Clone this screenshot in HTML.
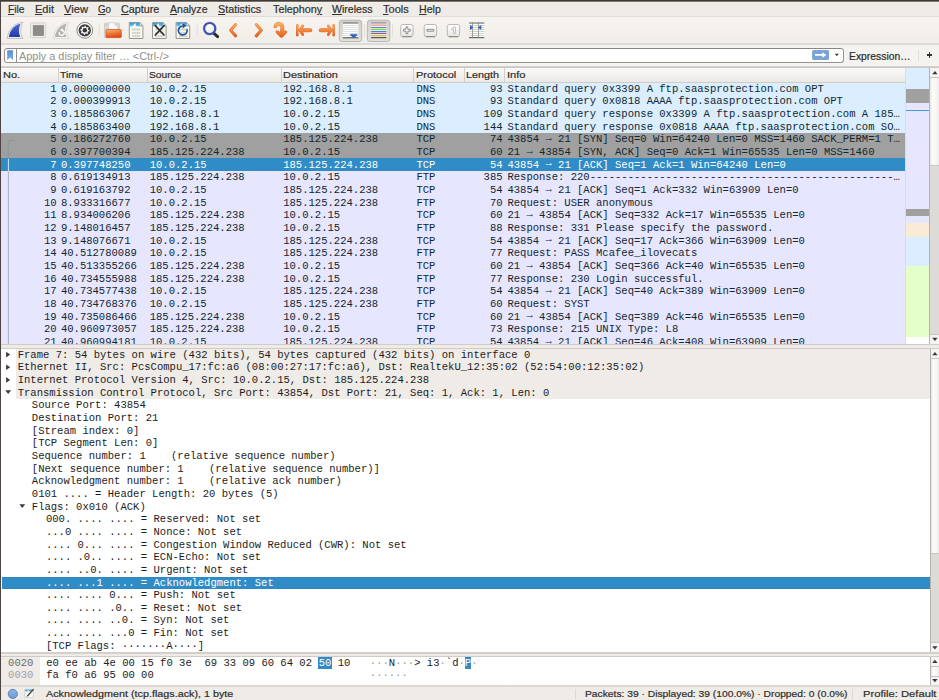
<!DOCTYPE html>
<html><head><meta charset="utf-8"><title>Wireshark</title>
<style>
html,body{margin:0;padding:0;}
body{width:939px;height:700px;overflow:hidden;position:relative;background:#efece8;font-family:"Liberation Sans",sans-serif;}
body div,body svg,body span.t{position:absolute;}
span.t{white-space:pre;display:block;}
span.s{-webkit-text-stroke:0.2px currentColor;}
.clip{overflow:hidden;}
i{font-style:normal;position:relative;top:-1.3px;}
u{text-decoration:underline;text-underline-offset:1.2px;text-decoration-thickness:1.15px;}
</style></head><body>
<div style="left:0.00px;top:0.00px;width:939.00px;height:700.00px;background:#efece8;"></div>
<div style="left:0.00px;top:0.00px;width:939.00px;height:16.30px;background:#efece8;"></div>
<div style="left:0.00px;top:1.60px;width:939.00px;height:1.20px;background:linear-gradient(#f9f7f4,#efece8);"></div>
<div style="left:0.00px;top:15.90px;width:939.00px;height:1.00px;background:#e0ddd8;"></div>
<div style="left:0.00px;top:16.90px;width:939.00px;height:25.80px;background:linear-gradient(#f7f4f0,#f1eeea);"></div>
<div style="left:0.00px;top:42.70px;width:939.00px;height:2.00px;background:linear-gradient(#e6e3df,#d9d6d1 50%,#e3e0dc);"></div>
<div style="left:0.00px;top:44.70px;width:939.00px;height:22.00px;background:#f5f3ef;"></div>
<span class="t s" style="top:2.26px;font-family:'Liberation Sans',sans-serif;font-size:10.5px;color:#302f2c;line-height:14.0px;left:8.40px;transform:scaleX(0.9801);transform-origin:0 0;"><u>F</u>ile</span>
<span class="t s" style="top:2.26px;font-family:'Liberation Sans',sans-serif;font-size:10.5px;color:#302f2c;line-height:14.0px;left:35.00px;transform:scaleX(1.0492);transform-origin:0 0;"><u>E</u>dit</span>
<span class="t s" style="top:2.26px;font-family:'Liberation Sans',sans-serif;font-size:10.5px;color:#302f2c;line-height:14.0px;left:64.00px;transform:scaleX(1.0622);transform-origin:0 0;"><u>V</u>iew</span>
<span class="t s" style="top:2.26px;font-family:'Liberation Sans',sans-serif;font-size:10.5px;color:#302f2c;line-height:14.0px;left:98.00px;transform:scaleX(0.9275);transform-origin:0 0;"><u>G</u>o</span>
<span class="t s" style="top:2.26px;font-family:'Liberation Sans',sans-serif;font-size:10.5px;color:#302f2c;line-height:14.0px;left:121.20px;transform:scaleX(1.0247);transform-origin:0 0;"><u>C</u>apture</span>
<span class="t s" style="top:2.26px;font-family:'Liberation Sans',sans-serif;font-size:10.5px;color:#302f2c;line-height:14.0px;left:169.50px;transform:scaleX(1.0033);transform-origin:0 0;"><u>A</u>nalyze</span>
<span class="t s" style="top:2.26px;font-family:'Liberation Sans',sans-serif;font-size:10.5px;color:#302f2c;line-height:14.0px;left:218.00px;transform:scaleX(1.0278);transform-origin:0 0;"><u>S</u>tatistics</span>
<span class="t s" style="top:2.26px;font-family:'Liberation Sans',sans-serif;font-size:10.5px;color:#302f2c;line-height:14.0px;left:272.50px;transform:scaleX(1.0277);transform-origin:0 0;">Telephon<u>y</u></span>
<span class="t s" style="top:2.26px;font-family:'Liberation Sans',sans-serif;font-size:10.5px;color:#302f2c;line-height:14.0px;left:332.00px;transform:scaleX(1.0058);transform-origin:0 0;"><u>W</u>ireless</span>
<span class="t s" style="top:2.26px;font-family:'Liberation Sans',sans-serif;font-size:10.5px;color:#302f2c;line-height:14.0px;left:383.00px;transform:scaleX(1.0483);transform-origin:0 0;"><u>T</u>ools</span>
<span class="t s" style="top:2.26px;font-family:'Liberation Sans',sans-serif;font-size:10.5px;color:#302f2c;line-height:14.0px;left:418.70px;transform:scaleX(1.0088);transform-origin:0 0;"><u>H</u>elp</span>
<div style="left:4.00px;top:47.80px;width:839.50px;height:15.00px;background:#fff;border:1px solid #96938f;border-top-color:#8a8783;border-radius:3.5px;box-sizing:border-box;"></div>
<div style="left:16.10px;top:48.80px;width:0.90px;height:13.20px;background:#96938f;"></div>
<span class="t" style="top:48.66px;font-family:'Liberation Sans',sans-serif;font-size:10.5px;color:#918f8c;line-height:14.0px;left:19.40px;transform:scaleX(1.0372);transform-origin:0 0;">Apply a display filter … &lt;Ctrl-/&gt;</span>
<span class="t s" style="top:48.66px;font-family:'Liberation Sans',sans-serif;font-size:10.5px;color:#2c2b28;line-height:14.0px;left:848.70px;transform:scaleX(0.9863);transform-origin:0 0;">Expression…</span>
<div style="left:917.90px;top:49.50px;width:0.90px;height:11.50px;background:#e1deda;"></div>
<div style="left:926.50px;top:54.45px;width:5.60px;height:1.15px;background:#33322f;"></div>
<div style="left:928.75px;top:52.20px;width:1.15px;height:5.60px;background:#33322f;"></div>
<div style="left:1.00px;top:67.60px;width:903.60px;height:14.90px;background:linear-gradient(#fbfaf9,#ebe8e4);"></div>
<div style="left:1.00px;top:81.80px;width:903.60px;height:0.80px;background:#d0cdc8;"></div>
<div style="left:0.00px;top:66.00px;width:939.00px;height:1.70px;background:linear-gradient(#d9d6d1,#c6c3be);"></div>
<div style="left:57.70px;top:68.10px;width:0.80px;height:13.90px;background:#d3d0cb;"></div>
<div style="left:146.70px;top:68.10px;width:0.80px;height:13.90px;background:#d3d0cb;"></div>
<div style="left:280.70px;top:68.10px;width:0.80px;height:13.90px;background:#d3d0cb;"></div>
<div style="left:413.30px;top:68.10px;width:0.80px;height:13.90px;background:#d3d0cb;"></div>
<div style="left:463.50px;top:68.10px;width:0.80px;height:13.90px;background:#d3d0cb;"></div>
<div style="left:503.60px;top:68.10px;width:0.80px;height:13.90px;background:#d3d0cb;"></div>
<span class="t s" style="top:68.32px;font-family:'Liberation Sans',sans-serif;font-size:9.9px;color:#2e2d2a;line-height:14.0px;left:3.20px;transform:scaleX(1.1122);transform-origin:0 0;">No.</span>
<span class="t s" style="top:68.32px;font-family:'Liberation Sans',sans-serif;font-size:9.9px;color:#2e2d2a;line-height:14.0px;left:60.40px;transform:scaleX(1.0566);transform-origin:0 0;">Time</span>
<span class="t s" style="top:68.32px;font-family:'Liberation Sans',sans-serif;font-size:9.9px;color:#2e2d2a;line-height:14.0px;left:149.40px;transform:scaleX(1.0321);transform-origin:0 0;">Source</span>
<span class="t s" style="top:68.32px;font-family:'Liberation Sans',sans-serif;font-size:9.9px;color:#2e2d2a;line-height:14.0px;left:283.40px;transform:scaleX(1.1112);transform-origin:0 0;">Destination</span>
<span class="t s" style="top:68.32px;font-family:'Liberation Sans',sans-serif;font-size:9.9px;color:#2e2d2a;line-height:14.0px;left:416.30px;transform:scaleX(1.1094);transform-origin:0 0;">Protocol</span>
<span class="t s" style="top:68.32px;font-family:'Liberation Sans',sans-serif;font-size:9.9px;color:#2e2d2a;line-height:14.0px;left:466.30px;transform:scaleX(1.092);transform-origin:0 0;">Length</span>
<span class="t s" style="top:68.32px;font-family:'Liberation Sans',sans-serif;font-size:9.9px;color:#2e2d2a;line-height:14.0px;left:506.70px;transform:scaleX(1.1223);transform-origin:0 0;">Info</span>
<div class="clip" style="left:1px;top:82.50px;width:903.60px;height:261.70px;">
<div style="left:0.00px;top:0.00px;width:903.60px;height:12.95px;background:#daeeff;"></div>
<span class="t" style="top:-0.66px;left:49.26px;font-family:'Liberation Mono',monospace;font-size:10.56px;color:#12272e;line-height:14.0px;">1</span>
<span class="t" style="top:-0.66px;font-family:'Liberation Mono',monospace;font-size:10.56px;color:#12272e;line-height:14.0px;left:59.90px;">0.000000000</span>
<span class="t" style="top:-0.66px;font-family:'Liberation Mono',monospace;font-size:10.56px;color:#12272e;line-height:14.0px;left:148.70px;">10.0.2.15</span>
<span class="t" style="top:-0.66px;font-family:'Liberation Mono',monospace;font-size:10.56px;color:#12272e;line-height:14.0px;left:282.20px;">192.168.8.1</span>
<span class="t" style="top:-0.66px;font-family:'Liberation Mono',monospace;font-size:10.56px;color:#12272e;line-height:14.0px;left:415.40px;">DNS</span>
<span class="t" style="top:-0.66px;left:488.93px;font-family:'Liberation Mono',monospace;font-size:10.56px;color:#12272e;line-height:14.0px;">93</span>
<span class="t" style="top:-0.66px;font-family:'Liberation Mono',monospace;font-size:10.56px;color:#12272e;line-height:14.0px;left:506.40px;">Standard query 0x3399 A ftp.saasprotection.com OPT</span>
<div style="left:0.00px;top:12.65px;width:903.60px;height:12.95px;background:#daeeff;"></div>
<span class="t" style="top:11.99px;left:49.26px;font-family:'Liberation Mono',monospace;font-size:10.56px;color:#12272e;line-height:14.0px;">2</span>
<span class="t" style="top:11.99px;font-family:'Liberation Mono',monospace;font-size:10.56px;color:#12272e;line-height:14.0px;left:59.90px;">0.000399913</span>
<span class="t" style="top:11.99px;font-family:'Liberation Mono',monospace;font-size:10.56px;color:#12272e;line-height:14.0px;left:148.70px;">10.0.2.15</span>
<span class="t" style="top:11.99px;font-family:'Liberation Mono',monospace;font-size:10.56px;color:#12272e;line-height:14.0px;left:282.20px;">192.168.8.1</span>
<span class="t" style="top:11.99px;font-family:'Liberation Mono',monospace;font-size:10.56px;color:#12272e;line-height:14.0px;left:415.40px;">DNS</span>
<span class="t" style="top:11.99px;left:488.93px;font-family:'Liberation Mono',monospace;font-size:10.56px;color:#12272e;line-height:14.0px;">93</span>
<span class="t" style="top:11.99px;font-family:'Liberation Mono',monospace;font-size:10.56px;color:#12272e;line-height:14.0px;left:506.40px;">Standard query 0x0818 AAAA ftp.saasprotection.com OPT</span>
<div style="left:0.00px;top:25.30px;width:903.60px;height:12.95px;background:#daeeff;"></div>
<span class="t" style="top:24.64px;left:49.26px;font-family:'Liberation Mono',monospace;font-size:10.56px;color:#12272e;line-height:14.0px;">3</span>
<span class="t" style="top:24.64px;font-family:'Liberation Mono',monospace;font-size:10.56px;color:#12272e;line-height:14.0px;left:59.90px;">0.185863067</span>
<span class="t" style="top:24.64px;font-family:'Liberation Mono',monospace;font-size:10.56px;color:#12272e;line-height:14.0px;left:148.70px;">192.168.8.1</span>
<span class="t" style="top:24.64px;font-family:'Liberation Mono',monospace;font-size:10.56px;color:#12272e;line-height:14.0px;left:282.20px;">10.0.2.15</span>
<span class="t" style="top:24.64px;font-family:'Liberation Mono',monospace;font-size:10.56px;color:#12272e;line-height:14.0px;left:415.40px;">DNS</span>
<span class="t" style="top:24.64px;left:482.59px;font-family:'Liberation Mono',monospace;font-size:10.56px;color:#12272e;line-height:14.0px;">109</span>
<span class="t" style="top:24.64px;font-family:'Liberation Mono',monospace;font-size:10.56px;color:#12272e;line-height:14.0px;left:506.40px;">Standard query response 0x3399 A ftp.saasprotection.com A 185…</span>
<div style="left:0.00px;top:37.95px;width:903.60px;height:12.95px;background:#daeeff;"></div>
<span class="t" style="top:37.29px;left:49.26px;font-family:'Liberation Mono',monospace;font-size:10.56px;color:#12272e;line-height:14.0px;">4</span>
<span class="t" style="top:37.29px;font-family:'Liberation Mono',monospace;font-size:10.56px;color:#12272e;line-height:14.0px;left:59.90px;">0.185863400</span>
<span class="t" style="top:37.29px;font-family:'Liberation Mono',monospace;font-size:10.56px;color:#12272e;line-height:14.0px;left:148.70px;">192.168.8.1</span>
<span class="t" style="top:37.29px;font-family:'Liberation Mono',monospace;font-size:10.56px;color:#12272e;line-height:14.0px;left:282.20px;">10.0.2.15</span>
<span class="t" style="top:37.29px;font-family:'Liberation Mono',monospace;font-size:10.56px;color:#12272e;line-height:14.0px;left:415.40px;">DNS</span>
<span class="t" style="top:37.29px;left:482.59px;font-family:'Liberation Mono',monospace;font-size:10.56px;color:#12272e;line-height:14.0px;">144</span>
<span class="t" style="top:37.29px;font-family:'Liberation Mono',monospace;font-size:10.56px;color:#12272e;line-height:14.0px;left:506.40px;">Standard query response 0x0818 AAAA ftp.saasprotection.com SO…</span>
<div style="left:0.00px;top:50.60px;width:903.60px;height:12.95px;background:#a0a0a0;"></div>
<span class="t" style="top:49.94px;left:49.26px;font-family:'Liberation Mono',monospace;font-size:10.56px;color:#12272e;line-height:14.0px;">5</span>
<span class="t" style="top:49.94px;font-family:'Liberation Mono',monospace;font-size:10.56px;color:#12272e;line-height:14.0px;left:59.90px;">0.186272760</span>
<span class="t" style="top:49.94px;font-family:'Liberation Mono',monospace;font-size:10.56px;color:#12272e;line-height:14.0px;left:148.70px;">10.0.2.15</span>
<span class="t" style="top:49.94px;font-family:'Liberation Mono',monospace;font-size:10.56px;color:#12272e;line-height:14.0px;left:282.20px;">185.125.224.238</span>
<span class="t" style="top:49.94px;font-family:'Liberation Mono',monospace;font-size:10.56px;color:#12272e;line-height:14.0px;left:415.40px;">TCP</span>
<span class="t" style="top:49.94px;left:488.93px;font-family:'Liberation Mono',monospace;font-size:10.56px;color:#12272e;line-height:14.0px;">74</span>
<span class="t" style="top:49.94px;font-family:'Liberation Mono',monospace;font-size:10.56px;color:#12272e;line-height:14.0px;left:506.40px;">43854 <i>→</i> 21 [SYN] Seq=0 Win=64240 Len=0 MSS=1460 SACK_PERM=1 T…</span>
<div style="left:0.00px;top:63.25px;width:903.60px;height:12.95px;background:#a0a0a0;"></div>
<span class="t" style="top:62.59px;left:49.26px;font-family:'Liberation Mono',monospace;font-size:10.56px;color:#12272e;line-height:14.0px;">6</span>
<span class="t" style="top:62.59px;font-family:'Liberation Mono',monospace;font-size:10.56px;color:#12272e;line-height:14.0px;left:59.90px;">0.397700394</span>
<span class="t" style="top:62.59px;font-family:'Liberation Mono',monospace;font-size:10.56px;color:#12272e;line-height:14.0px;left:148.70px;">185.125.224.238</span>
<span class="t" style="top:62.59px;font-family:'Liberation Mono',monospace;font-size:10.56px;color:#12272e;line-height:14.0px;left:282.20px;">10.0.2.15</span>
<span class="t" style="top:62.59px;font-family:'Liberation Mono',monospace;font-size:10.56px;color:#12272e;line-height:14.0px;left:415.40px;">TCP</span>
<span class="t" style="top:62.59px;left:488.93px;font-family:'Liberation Mono',monospace;font-size:10.56px;color:#12272e;line-height:14.0px;">60</span>
<span class="t" style="top:62.59px;font-family:'Liberation Mono',monospace;font-size:10.56px;color:#12272e;line-height:14.0px;left:506.40px;">21 <i>→</i> 43854 [SYN, ACK] Seq=0 Ack=1 Win=65535 Len=0 MSS=1460</span>
<div style="left:0.00px;top:75.90px;width:903.60px;height:12.95px;background:#308cc6;"></div>
<span class="t" style="top:75.24px;left:49.26px;font-family:'Liberation Mono',monospace;font-size:10.56px;color:#fff;line-height:14.0px;">7</span>
<span class="t" style="top:75.24px;font-family:'Liberation Mono',monospace;font-size:10.56px;color:#fff;line-height:14.0px;left:59.90px;">0.397748250</span>
<span class="t" style="top:75.24px;font-family:'Liberation Mono',monospace;font-size:10.56px;color:#fff;line-height:14.0px;left:148.70px;">10.0.2.15</span>
<span class="t" style="top:75.24px;font-family:'Liberation Mono',monospace;font-size:10.56px;color:#fff;line-height:14.0px;left:282.20px;">185.125.224.238</span>
<span class="t" style="top:75.24px;font-family:'Liberation Mono',monospace;font-size:10.56px;color:#fff;line-height:14.0px;left:415.40px;">TCP</span>
<span class="t" style="top:75.24px;left:488.93px;font-family:'Liberation Mono',monospace;font-size:10.56px;color:#fff;line-height:14.0px;">54</span>
<span class="t" style="top:75.24px;font-family:'Liberation Mono',monospace;font-size:10.56px;color:#fff;line-height:14.0px;left:506.40px;">43854 <i>→</i> 21 [ACK] Seq=1 Ack=1 Win=64240 Len=0</span>
<div style="left:0.00px;top:88.55px;width:903.60px;height:12.95px;background:#e7e6ff;"></div>
<span class="t" style="top:87.89px;left:49.26px;font-family:'Liberation Mono',monospace;font-size:10.56px;color:#12272e;line-height:14.0px;">8</span>
<span class="t" style="top:87.89px;font-family:'Liberation Mono',monospace;font-size:10.56px;color:#12272e;line-height:14.0px;left:59.90px;">0.619134913</span>
<span class="t" style="top:87.89px;font-family:'Liberation Mono',monospace;font-size:10.56px;color:#12272e;line-height:14.0px;left:148.70px;">185.125.224.238</span>
<span class="t" style="top:87.89px;font-family:'Liberation Mono',monospace;font-size:10.56px;color:#12272e;line-height:14.0px;left:282.20px;">10.0.2.15</span>
<span class="t" style="top:87.89px;font-family:'Liberation Mono',monospace;font-size:10.56px;color:#12272e;line-height:14.0px;left:415.40px;">FTP</span>
<span class="t" style="top:87.89px;left:482.59px;font-family:'Liberation Mono',monospace;font-size:10.56px;color:#12272e;line-height:14.0px;">385</span>
<span class="t" style="top:87.89px;font-family:'Liberation Mono',monospace;font-size:10.56px;color:#12272e;line-height:14.0px;left:506.40px;">Response: 220------------------------------------------------…</span>
<div style="left:0.00px;top:101.20px;width:903.60px;height:12.95px;background:#e7e6ff;"></div>
<span class="t" style="top:100.54px;left:49.26px;font-family:'Liberation Mono',monospace;font-size:10.56px;color:#12272e;line-height:14.0px;">9</span>
<span class="t" style="top:100.54px;font-family:'Liberation Mono',monospace;font-size:10.56px;color:#12272e;line-height:14.0px;left:59.90px;">0.619163792</span>
<span class="t" style="top:100.54px;font-family:'Liberation Mono',monospace;font-size:10.56px;color:#12272e;line-height:14.0px;left:148.70px;">10.0.2.15</span>
<span class="t" style="top:100.54px;font-family:'Liberation Mono',monospace;font-size:10.56px;color:#12272e;line-height:14.0px;left:282.20px;">185.125.224.238</span>
<span class="t" style="top:100.54px;font-family:'Liberation Mono',monospace;font-size:10.56px;color:#12272e;line-height:14.0px;left:415.40px;">TCP</span>
<span class="t" style="top:100.54px;left:488.93px;font-family:'Liberation Mono',monospace;font-size:10.56px;color:#12272e;line-height:14.0px;">54</span>
<span class="t" style="top:100.54px;font-family:'Liberation Mono',monospace;font-size:10.56px;color:#12272e;line-height:14.0px;left:506.40px;">43854 <i>→</i> 21 [ACK] Seq=1 Ack=332 Win=63909 Len=0</span>
<div style="left:0.00px;top:113.85px;width:903.60px;height:12.95px;background:#e7e6ff;"></div>
<span class="t" style="top:113.19px;left:42.93px;font-family:'Liberation Mono',monospace;font-size:10.56px;color:#12272e;line-height:14.0px;">10</span>
<span class="t" style="top:113.19px;font-family:'Liberation Mono',monospace;font-size:10.56px;color:#12272e;line-height:14.0px;left:59.90px;">8.933316677</span>
<span class="t" style="top:113.19px;font-family:'Liberation Mono',monospace;font-size:10.56px;color:#12272e;line-height:14.0px;left:148.70px;">10.0.2.15</span>
<span class="t" style="top:113.19px;font-family:'Liberation Mono',monospace;font-size:10.56px;color:#12272e;line-height:14.0px;left:282.20px;">185.125.224.238</span>
<span class="t" style="top:113.19px;font-family:'Liberation Mono',monospace;font-size:10.56px;color:#12272e;line-height:14.0px;left:415.40px;">FTP</span>
<span class="t" style="top:113.19px;left:488.93px;font-family:'Liberation Mono',monospace;font-size:10.56px;color:#12272e;line-height:14.0px;">70</span>
<span class="t" style="top:113.19px;font-family:'Liberation Mono',monospace;font-size:10.56px;color:#12272e;line-height:14.0px;left:506.40px;">Request: USER anonymous</span>
<div style="left:0.00px;top:126.50px;width:903.60px;height:12.95px;background:#e7e6ff;"></div>
<span class="t" style="top:125.84px;left:42.93px;font-family:'Liberation Mono',monospace;font-size:10.56px;color:#12272e;line-height:14.0px;">11</span>
<span class="t" style="top:125.84px;font-family:'Liberation Mono',monospace;font-size:10.56px;color:#12272e;line-height:14.0px;left:59.90px;">8.934006206</span>
<span class="t" style="top:125.84px;font-family:'Liberation Mono',monospace;font-size:10.56px;color:#12272e;line-height:14.0px;left:148.70px;">185.125.224.238</span>
<span class="t" style="top:125.84px;font-family:'Liberation Mono',monospace;font-size:10.56px;color:#12272e;line-height:14.0px;left:282.20px;">10.0.2.15</span>
<span class="t" style="top:125.84px;font-family:'Liberation Mono',monospace;font-size:10.56px;color:#12272e;line-height:14.0px;left:415.40px;">TCP</span>
<span class="t" style="top:125.84px;left:488.93px;font-family:'Liberation Mono',monospace;font-size:10.56px;color:#12272e;line-height:14.0px;">60</span>
<span class="t" style="top:125.84px;font-family:'Liberation Mono',monospace;font-size:10.56px;color:#12272e;line-height:14.0px;left:506.40px;">21 <i>→</i> 43854 [ACK] Seq=332 Ack=17 Win=65535 Len=0</span>
<div style="left:0.00px;top:139.15px;width:903.60px;height:12.95px;background:#e7e6ff;"></div>
<span class="t" style="top:138.49px;left:42.93px;font-family:'Liberation Mono',monospace;font-size:10.56px;color:#12272e;line-height:14.0px;">12</span>
<span class="t" style="top:138.49px;font-family:'Liberation Mono',monospace;font-size:10.56px;color:#12272e;line-height:14.0px;left:59.90px;">9.148016457</span>
<span class="t" style="top:138.49px;font-family:'Liberation Mono',monospace;font-size:10.56px;color:#12272e;line-height:14.0px;left:148.70px;">185.125.224.238</span>
<span class="t" style="top:138.49px;font-family:'Liberation Mono',monospace;font-size:10.56px;color:#12272e;line-height:14.0px;left:282.20px;">10.0.2.15</span>
<span class="t" style="top:138.49px;font-family:'Liberation Mono',monospace;font-size:10.56px;color:#12272e;line-height:14.0px;left:415.40px;">FTP</span>
<span class="t" style="top:138.49px;left:488.93px;font-family:'Liberation Mono',monospace;font-size:10.56px;color:#12272e;line-height:14.0px;">88</span>
<span class="t" style="top:138.49px;font-family:'Liberation Mono',monospace;font-size:10.56px;color:#12272e;line-height:14.0px;left:506.40px;">Response: 331 Please specify the password.</span>
<div style="left:0.00px;top:151.80px;width:903.60px;height:12.95px;background:#e7e6ff;"></div>
<span class="t" style="top:151.14px;left:42.93px;font-family:'Liberation Mono',monospace;font-size:10.56px;color:#12272e;line-height:14.0px;">13</span>
<span class="t" style="top:151.14px;font-family:'Liberation Mono',monospace;font-size:10.56px;color:#12272e;line-height:14.0px;left:59.90px;">9.148076671</span>
<span class="t" style="top:151.14px;font-family:'Liberation Mono',monospace;font-size:10.56px;color:#12272e;line-height:14.0px;left:148.70px;">10.0.2.15</span>
<span class="t" style="top:151.14px;font-family:'Liberation Mono',monospace;font-size:10.56px;color:#12272e;line-height:14.0px;left:282.20px;">185.125.224.238</span>
<span class="t" style="top:151.14px;font-family:'Liberation Mono',monospace;font-size:10.56px;color:#12272e;line-height:14.0px;left:415.40px;">TCP</span>
<span class="t" style="top:151.14px;left:488.93px;font-family:'Liberation Mono',monospace;font-size:10.56px;color:#12272e;line-height:14.0px;">54</span>
<span class="t" style="top:151.14px;font-family:'Liberation Mono',monospace;font-size:10.56px;color:#12272e;line-height:14.0px;left:506.40px;">43854 <i>→</i> 21 [ACK] Seq=17 Ack=366 Win=63909 Len=0</span>
<div style="left:0.00px;top:164.45px;width:903.60px;height:12.95px;background:#e7e6ff;"></div>
<span class="t" style="top:163.79px;left:42.93px;font-family:'Liberation Mono',monospace;font-size:10.56px;color:#12272e;line-height:14.0px;">14</span>
<span class="t" style="top:163.79px;font-family:'Liberation Mono',monospace;font-size:10.56px;color:#12272e;line-height:14.0px;left:59.90px;">40.512780089</span>
<span class="t" style="top:163.79px;font-family:'Liberation Mono',monospace;font-size:10.56px;color:#12272e;line-height:14.0px;left:148.70px;">10.0.2.15</span>
<span class="t" style="top:163.79px;font-family:'Liberation Mono',monospace;font-size:10.56px;color:#12272e;line-height:14.0px;left:282.20px;">185.125.224.238</span>
<span class="t" style="top:163.79px;font-family:'Liberation Mono',monospace;font-size:10.56px;color:#12272e;line-height:14.0px;left:415.40px;">FTP</span>
<span class="t" style="top:163.79px;left:488.93px;font-family:'Liberation Mono',monospace;font-size:10.56px;color:#12272e;line-height:14.0px;">77</span>
<span class="t" style="top:163.79px;font-family:'Liberation Mono',monospace;font-size:10.56px;color:#12272e;line-height:14.0px;left:506.40px;">Request: PASS Mcafee_ilovecats</span>
<div style="left:0.00px;top:177.10px;width:903.60px;height:12.95px;background:#e7e6ff;"></div>
<span class="t" style="top:176.44px;left:42.93px;font-family:'Liberation Mono',monospace;font-size:10.56px;color:#12272e;line-height:14.0px;">15</span>
<span class="t" style="top:176.44px;font-family:'Liberation Mono',monospace;font-size:10.56px;color:#12272e;line-height:14.0px;left:59.90px;">40.513355266</span>
<span class="t" style="top:176.44px;font-family:'Liberation Mono',monospace;font-size:10.56px;color:#12272e;line-height:14.0px;left:148.70px;">185.125.224.238</span>
<span class="t" style="top:176.44px;font-family:'Liberation Mono',monospace;font-size:10.56px;color:#12272e;line-height:14.0px;left:282.20px;">10.0.2.15</span>
<span class="t" style="top:176.44px;font-family:'Liberation Mono',monospace;font-size:10.56px;color:#12272e;line-height:14.0px;left:415.40px;">TCP</span>
<span class="t" style="top:176.44px;left:488.93px;font-family:'Liberation Mono',monospace;font-size:10.56px;color:#12272e;line-height:14.0px;">60</span>
<span class="t" style="top:176.44px;font-family:'Liberation Mono',monospace;font-size:10.56px;color:#12272e;line-height:14.0px;left:506.40px;">21 <i>→</i> 43854 [ACK] Seq=366 Ack=40 Win=65535 Len=0</span>
<div style="left:0.00px;top:189.75px;width:903.60px;height:12.95px;background:#e7e6ff;"></div>
<span class="t" style="top:189.09px;left:42.93px;font-family:'Liberation Mono',monospace;font-size:10.56px;color:#12272e;line-height:14.0px;">16</span>
<span class="t" style="top:189.09px;font-family:'Liberation Mono',monospace;font-size:10.56px;color:#12272e;line-height:14.0px;left:59.90px;">40.734555988</span>
<span class="t" style="top:189.09px;font-family:'Liberation Mono',monospace;font-size:10.56px;color:#12272e;line-height:14.0px;left:148.70px;">185.125.224.238</span>
<span class="t" style="top:189.09px;font-family:'Liberation Mono',monospace;font-size:10.56px;color:#12272e;line-height:14.0px;left:282.20px;">10.0.2.15</span>
<span class="t" style="top:189.09px;font-family:'Liberation Mono',monospace;font-size:10.56px;color:#12272e;line-height:14.0px;left:415.40px;">FTP</span>
<span class="t" style="top:189.09px;left:488.93px;font-family:'Liberation Mono',monospace;font-size:10.56px;color:#12272e;line-height:14.0px;">77</span>
<span class="t" style="top:189.09px;font-family:'Liberation Mono',monospace;font-size:10.56px;color:#12272e;line-height:14.0px;left:506.40px;">Response: 230 Login successful.</span>
<div style="left:0.00px;top:202.40px;width:903.60px;height:12.95px;background:#e7e6ff;"></div>
<span class="t" style="top:201.74px;left:42.93px;font-family:'Liberation Mono',monospace;font-size:10.56px;color:#12272e;line-height:14.0px;">17</span>
<span class="t" style="top:201.74px;font-family:'Liberation Mono',monospace;font-size:10.56px;color:#12272e;line-height:14.0px;left:59.90px;">40.734577438</span>
<span class="t" style="top:201.74px;font-family:'Liberation Mono',monospace;font-size:10.56px;color:#12272e;line-height:14.0px;left:148.70px;">10.0.2.15</span>
<span class="t" style="top:201.74px;font-family:'Liberation Mono',monospace;font-size:10.56px;color:#12272e;line-height:14.0px;left:282.20px;">185.125.224.238</span>
<span class="t" style="top:201.74px;font-family:'Liberation Mono',monospace;font-size:10.56px;color:#12272e;line-height:14.0px;left:415.40px;">TCP</span>
<span class="t" style="top:201.74px;left:488.93px;font-family:'Liberation Mono',monospace;font-size:10.56px;color:#12272e;line-height:14.0px;">54</span>
<span class="t" style="top:201.74px;font-family:'Liberation Mono',monospace;font-size:10.56px;color:#12272e;line-height:14.0px;left:506.40px;">43854 <i>→</i> 21 [ACK] Seq=40 Ack=389 Win=63909 Len=0</span>
<div style="left:0.00px;top:215.05px;width:903.60px;height:12.95px;background:#e7e6ff;"></div>
<span class="t" style="top:214.39px;left:42.93px;font-family:'Liberation Mono',monospace;font-size:10.56px;color:#12272e;line-height:14.0px;">18</span>
<span class="t" style="top:214.39px;font-family:'Liberation Mono',monospace;font-size:10.56px;color:#12272e;line-height:14.0px;left:59.90px;">40.734768376</span>
<span class="t" style="top:214.39px;font-family:'Liberation Mono',monospace;font-size:10.56px;color:#12272e;line-height:14.0px;left:148.70px;">10.0.2.15</span>
<span class="t" style="top:214.39px;font-family:'Liberation Mono',monospace;font-size:10.56px;color:#12272e;line-height:14.0px;left:282.20px;">185.125.224.238</span>
<span class="t" style="top:214.39px;font-family:'Liberation Mono',monospace;font-size:10.56px;color:#12272e;line-height:14.0px;left:415.40px;">FTP</span>
<span class="t" style="top:214.39px;left:488.93px;font-family:'Liberation Mono',monospace;font-size:10.56px;color:#12272e;line-height:14.0px;">60</span>
<span class="t" style="top:214.39px;font-family:'Liberation Mono',monospace;font-size:10.56px;color:#12272e;line-height:14.0px;left:506.40px;">Request: SYST</span>
<div style="left:0.00px;top:227.70px;width:903.60px;height:12.95px;background:#e7e6ff;"></div>
<span class="t" style="top:227.04px;left:42.93px;font-family:'Liberation Mono',monospace;font-size:10.56px;color:#12272e;line-height:14.0px;">19</span>
<span class="t" style="top:227.04px;font-family:'Liberation Mono',monospace;font-size:10.56px;color:#12272e;line-height:14.0px;left:59.90px;">40.735086466</span>
<span class="t" style="top:227.04px;font-family:'Liberation Mono',monospace;font-size:10.56px;color:#12272e;line-height:14.0px;left:148.70px;">185.125.224.238</span>
<span class="t" style="top:227.04px;font-family:'Liberation Mono',monospace;font-size:10.56px;color:#12272e;line-height:14.0px;left:282.20px;">10.0.2.15</span>
<span class="t" style="top:227.04px;font-family:'Liberation Mono',monospace;font-size:10.56px;color:#12272e;line-height:14.0px;left:415.40px;">TCP</span>
<span class="t" style="top:227.04px;left:488.93px;font-family:'Liberation Mono',monospace;font-size:10.56px;color:#12272e;line-height:14.0px;">60</span>
<span class="t" style="top:227.04px;font-family:'Liberation Mono',monospace;font-size:10.56px;color:#12272e;line-height:14.0px;left:506.40px;">21 <i>→</i> 43854 [ACK] Seq=389 Ack=46 Win=65535 Len=0</span>
<div style="left:0.00px;top:240.35px;width:903.60px;height:12.95px;background:#e7e6ff;"></div>
<span class="t" style="top:239.69px;left:42.93px;font-family:'Liberation Mono',monospace;font-size:10.56px;color:#12272e;line-height:14.0px;">20</span>
<span class="t" style="top:239.69px;font-family:'Liberation Mono',monospace;font-size:10.56px;color:#12272e;line-height:14.0px;left:59.90px;">40.960973057</span>
<span class="t" style="top:239.69px;font-family:'Liberation Mono',monospace;font-size:10.56px;color:#12272e;line-height:14.0px;left:148.70px;">185.125.224.238</span>
<span class="t" style="top:239.69px;font-family:'Liberation Mono',monospace;font-size:10.56px;color:#12272e;line-height:14.0px;left:282.20px;">10.0.2.15</span>
<span class="t" style="top:239.69px;font-family:'Liberation Mono',monospace;font-size:10.56px;color:#12272e;line-height:14.0px;left:415.40px;">FTP</span>
<span class="t" style="top:239.69px;left:488.93px;font-family:'Liberation Mono',monospace;font-size:10.56px;color:#12272e;line-height:14.0px;">73</span>
<span class="t" style="top:239.69px;font-family:'Liberation Mono',monospace;font-size:10.56px;color:#12272e;line-height:14.0px;left:506.40px;">Response: 215 UNIX Type: L8</span>
<div style="left:0.00px;top:253.00px;width:903.60px;height:12.95px;background:#e7e6ff;"></div>
<span class="t" style="top:252.34px;left:42.93px;font-family:'Liberation Mono',monospace;font-size:10.56px;color:#12272e;line-height:14.0px;">21</span>
<span class="t" style="top:252.34px;font-family:'Liberation Mono',monospace;font-size:10.56px;color:#12272e;line-height:14.0px;left:59.90px;">40.960994181</span>
<span class="t" style="top:252.34px;font-family:'Liberation Mono',monospace;font-size:10.56px;color:#12272e;line-height:14.0px;left:148.70px;">10.0.2.15</span>
<span class="t" style="top:252.34px;font-family:'Liberation Mono',monospace;font-size:10.56px;color:#12272e;line-height:14.0px;left:282.20px;">185.125.224.238</span>
<span class="t" style="top:252.34px;font-family:'Liberation Mono',monospace;font-size:10.56px;color:#12272e;line-height:14.0px;left:415.40px;">TCP</span>
<span class="t" style="top:252.34px;left:488.93px;font-family:'Liberation Mono',monospace;font-size:10.56px;color:#12272e;line-height:14.0px;">54</span>
<span class="t" style="top:252.34px;font-family:'Liberation Mono',monospace;font-size:10.56px;color:#12272e;line-height:14.0px;left:506.40px;">43854 <i>→</i> 21 [ACK] Seq=46 Ack=408 Win=63909 Len=0</span>
<svg style="left:0;top:0;width:60px;height:261.70px;" viewBox="0 0 60 261.70"><path d="M12.600000000000001,57.5 L7.4,57.5 L7.4,75.9" fill="none" stroke="#8c9498" stroke-width="0.8"/><path d="M2.0,70.95 L6.4,72.55 L13.0,68.25" fill="none" stroke="#949a9c" stroke-width="0.7"/><path d="M7.4,75.9 L7.4,88.55" stroke="#e8f2fa" stroke-width="0.9"/><path d="M7.4,88.55 L7.4,261.7" stroke="#a3a6bd" stroke-width="0.9"/></svg>
</div>
<div style="left:904.60px;top:67.60px;width:0.90px;height:276.60px;background:#dddbe0;"></div>
<div style="left:905.50px;top:67.90px;width:23.70px;height:21.30px;background:#daeeff;"></div>
<div style="left:905.50px;top:89.00px;width:23.70px;height:13.90px;background:#a0a0a0;"></div>
<div style="left:905.50px;top:102.70px;width:23.70px;height:106.50px;background:#e7e6ff;"></div>
<div style="left:905.50px;top:209.00px;width:23.70px;height:7.20px;background:#a0a0a0;"></div>
<div style="left:905.50px;top:216.00px;width:23.70px;height:7.50px;background:#e7e6ff;"></div>
<div style="left:905.50px;top:223.30px;width:23.70px;height:13.90px;background:#faebd7;"></div>
<div style="left:905.50px;top:237.00px;width:23.70px;height:29.20px;background:#daeeff;"></div>
<div style="left:905.50px;top:266.00px;width:23.70px;height:71.20px;background:#e4ffc7;"></div>
<div style="left:905.50px;top:337.00px;width:23.70px;height:7.00px;background:#ffffff;"></div>
<div style="left:905.50px;top:109.90px;width:23.70px;height:0.90px;background:#4a9bd1;"></div>
<div style="left:904.60px;top:343.70px;width:25.50px;height:0.80px;background:#b7b4b0;"></div>
<div style="left:929.20px;top:67.60px;width:1.00px;height:276.60px;background:#b7b4b0;"></div>
<div style="left:930.30px;top:67.60px;width:8.70px;height:276.60px;background:#dddbd8;"></div>
<div style="left:930.30px;top:67.60px;width:8.70px;height:9.60px;background:#f5f4f2;"></div>
<div style="left:930.30px;top:77.10px;width:8.70px;height:88.00px;background:linear-gradient(90deg,#e4e2df,#fbfbfa 25%,#f7f6f5 70%,#eceae8);"></div>
<div style="left:930.30px;top:77.00px;width:8.70px;height:0.70px;background:#c9c6c2;"></div>
<div style="left:930.30px;top:165.00px;width:8.70px;height:0.70px;background:#c9c6c2;"></div>
<div style="left:930.30px;top:334.30px;width:8.70px;height:9.90px;background:#f5f4f2;"></div>
<div style="left:930.30px;top:334.00px;width:8.70px;height:0.70px;background:#c9c6c2;"></div>
<svg style="left:0;top:0;width:939px;height:700px;" viewBox="0 0 939 700"><polygon points="932.1999999999999,74.3 937.6,74.3 934.9,71.10000000000001" fill="#3c3b37"/></svg>
<svg style="left:0;top:0;width:939px;height:700px;" viewBox="0 0 939 700"><polygon points="932.1999999999999,337.79999999999995 937.6,337.79999999999995 934.9,341.0" fill="#3c3b37"/></svg>
<div style="left:1.00px;top:348.90px;width:938.00px;height:303.60px;background:#fff;"></div>
<div style="left:0.00px;top:344.20px;width:939.00px;height:4.70px;background:#efece8;"></div>
<div style="left:0.00px;top:344.10px;width:939.00px;height:1.00px;background:#d0cdc8;"></div>
<div style="left:0.00px;top:347.90px;width:939.00px;height:1.00px;background:#d0cdc8;"></div>
<div style="left:16.00px;top:348.90px;width:914.20px;height:49.90px;background:#efebe7;"></div>
<span class="t" style="top:347.79px;font-family:'Liberation Mono',monospace;font-size:10.56px;color:#1c1c1c;line-height:14.0px;left:17.70px;">Frame 7: 54 bytes on wire (432 bits), 54 bytes captured (432 bits) on interface 0</span>
<svg style="left:0;top:0;width:939px;height:700px;" viewBox="0 0 939 700"><polygon points="6.1,351.8 6.1,357.40000000000003 10.2,354.6" fill="#3c3b37"/></svg>
<span class="t" style="top:360.44px;font-family:'Liberation Mono',monospace;font-size:10.56px;color:#1c1c1c;line-height:14.0px;left:17.70px;">Ethernet II, Src: PcsCompu_17:fc:a6 (08:00:27:17:fc:a6), Dst: RealtekU_12:35:02 (52:54:00:12:35:02)</span>
<svg style="left:0;top:0;width:939px;height:700px;" viewBox="0 0 939 700"><polygon points="6.1,364.452 6.1,370.052 10.2,367.252" fill="#3c3b37"/></svg>
<span class="t" style="top:373.09px;font-family:'Liberation Mono',monospace;font-size:10.56px;color:#1c1c1c;line-height:14.0px;left:17.70px;">Internet Protocol Version 4, Src: 10.0.2.15, Dst: 185.125.224.238</span>
<svg style="left:0;top:0;width:939px;height:700px;" viewBox="0 0 939 700"><polygon points="6.1,377.104 6.1,382.704 10.2,379.904" fill="#3c3b37"/></svg>
<span class="t" style="top:385.74px;font-family:'Liberation Mono',monospace;font-size:10.56px;color:#1c1c1c;line-height:14.0px;left:17.70px;">Transmission Control Protocol, Src Port: 43854, Dst Port: 21, Seq: 1, Ack: 1, Len: 0</span>
<svg style="left:0;top:0;width:939px;height:700px;" viewBox="0 0 939 700"><polygon points="5.299999999999999,390.35600000000005 11.1,390.35600000000005 8.2,394.05600000000004" fill="#3c3b37"/></svg>
<span class="t" style="top:398.39px;font-family:'Liberation Mono',monospace;font-size:10.56px;color:#1c1c1c;line-height:14.0px;left:31.80px;">Source Port: 43854</span>
<span class="t" style="top:411.05px;font-family:'Liberation Mono',monospace;font-size:10.56px;color:#1c1c1c;line-height:14.0px;left:31.80px;">Destination Port: 21</span>
<span class="t" style="top:423.70px;font-family:'Liberation Mono',monospace;font-size:10.56px;color:#1c1c1c;line-height:14.0px;left:31.80px;">[Stream index: 0]</span>
<span class="t" style="top:436.35px;font-family:'Liberation Mono',monospace;font-size:10.56px;color:#1c1c1c;line-height:14.0px;left:31.80px;">[TCP Segment Len: 0]</span>
<span class="t" style="top:449.00px;font-family:'Liberation Mono',monospace;font-size:10.56px;color:#1c1c1c;line-height:14.0px;left:31.80px;">Sequence number: 1    (relative sequence number)</span>
<span class="t" style="top:461.65px;font-family:'Liberation Mono',monospace;font-size:10.56px;color:#1c1c1c;line-height:14.0px;left:31.80px;">[Next sequence number: 1    (relative sequence number)]</span>
<span class="t" style="top:474.31px;font-family:'Liberation Mono',monospace;font-size:10.56px;color:#1c1c1c;line-height:14.0px;left:31.80px;">Acknowledgment number: 1    (relative ack number)</span>
<span class="t" style="top:486.96px;font-family:'Liberation Mono',monospace;font-size:10.56px;color:#1c1c1c;line-height:14.0px;left:31.80px;">0101 .... = Header Length: 20 bytes (5)</span>
<span class="t" style="top:499.61px;font-family:'Liberation Mono',monospace;font-size:10.56px;color:#1c1c1c;line-height:14.0px;left:31.80px;">Flags: 0x010 (ACK)</span>
<svg style="left:0;top:0;width:939px;height:700px;" viewBox="0 0 939 700"><polygon points="19.4,504.22400000000005 25.199999999999996,504.22400000000005 22.299999999999997,507.92400000000004" fill="#3c3b37"/></svg>
<span class="t" style="top:512.26px;font-family:'Liberation Mono',monospace;font-size:10.56px;color:#1c1c1c;line-height:14.0px;left:45.90px;">000. .... .... = Reserved: Not set</span>
<span class="t" style="top:524.91px;font-family:'Liberation Mono',monospace;font-size:10.56px;color:#1c1c1c;line-height:14.0px;left:45.90px;">...0 .... .... = Nonce: Not set</span>
<span class="t" style="top:537.57px;font-family:'Liberation Mono',monospace;font-size:10.56px;color:#1c1c1c;line-height:14.0px;left:45.90px;">.... 0... .... = Congestion Window Reduced (CWR): Not set</span>
<span class="t" style="top:550.22px;font-family:'Liberation Mono',monospace;font-size:10.56px;color:#1c1c1c;line-height:14.0px;left:45.90px;">.... .0.. .... = ECN-Echo: Not set</span>
<span class="t" style="top:562.87px;font-family:'Liberation Mono',monospace;font-size:10.56px;color:#1c1c1c;line-height:14.0px;left:45.90px;">.... ..0. .... = Urgent: Not set</span>
<div style="left:1.80px;top:576.89px;width:928.40px;height:12.30px;background:linear-gradient(#2c82bc,#308cc6 8%,#308cc6 92%,#2c82bc);"></div>
<span class="t" style="top:575.52px;font-family:'Liberation Mono',monospace;font-size:10.56px;color:#fff;line-height:14.0px;left:45.90px;">.... ...1 .... = Acknowledgment: Set</span>
<span class="t" style="top:588.17px;font-family:'Liberation Mono',monospace;font-size:10.56px;color:#1c1c1c;line-height:14.0px;left:45.90px;">.... .... 0... = Push: Not set</span>
<span class="t" style="top:600.83px;font-family:'Liberation Mono',monospace;font-size:10.56px;color:#1c1c1c;line-height:14.0px;left:45.90px;">.... .... .0.. = Reset: Not set</span>
<span class="t" style="top:613.48px;font-family:'Liberation Mono',monospace;font-size:10.56px;color:#1c1c1c;line-height:14.0px;left:45.90px;">.... .... ..0. = Syn: Not set</span>
<span class="t" style="top:626.13px;font-family:'Liberation Mono',monospace;font-size:10.56px;color:#1c1c1c;line-height:14.0px;left:45.90px;">.... .... ...0 = Fin: Not set</span>
<span class="t" style="top:638.78px;font-family:'Liberation Mono',monospace;font-size:10.56px;color:#1c1c1c;line-height:14.0px;left:45.90px;">[TCP Flags: ·······A····]</span>
<div style="left:930.20px;top:348.90px;width:0.90px;height:303.60px;background:#b7b4b0;"></div>
<div style="left:931.10px;top:348.90px;width:7.90px;height:303.60px;background:#dddbd8;"></div>
<div style="left:931.10px;top:348.90px;width:7.90px;height:9.40px;background:#f5f4f2;"></div>
<div style="left:931.10px;top:358.00px;width:7.90px;height:195.00px;background:linear-gradient(90deg,#e4e2df,#fbfbfa 25%,#f7f6f5 70%,#eceae8);"></div>
<div style="left:931.10px;top:357.80px;width:7.90px;height:0.70px;background:#c9c6c2;"></div>
<div style="left:931.10px;top:553.00px;width:7.90px;height:0.70px;background:#c9c6c2;"></div>
<div style="left:931.10px;top:642.60px;width:7.90px;height:9.90px;background:#f5f4f2;"></div>
<div style="left:931.10px;top:642.30px;width:7.90px;height:0.70px;background:#c9c6c2;"></div>
<svg style="left:0;top:0;width:939px;height:700px;" viewBox="0 0 939 700"><polygon points="932.1999999999999,355.20000000000005 937.6,355.20000000000005 934.9,352.0" fill="#3c3b37"/></svg>
<svg style="left:0;top:0;width:939px;height:700px;" viewBox="0 0 939 700"><polygon points="932.1999999999999,646.1999999999999 937.6,646.1999999999999 934.9,649.4" fill="#3c3b37"/></svg>
<div style="left:0.00px;top:652.50px;width:939.00px;height:4.00px;background:#efece8;"></div>
<div style="left:0.00px;top:652.40px;width:939.00px;height:1.20px;background:#d3d0cb;"></div>
<div style="left:1.00px;top:656.50px;width:938.00px;height:28.90px;background:#fff;"></div>
<div style="left:0.00px;top:655.50px;width:939.00px;height:1.10px;background:#cfccc7;"></div>
<div style="left:0.00px;top:685.40px;width:939.00px;height:1.70px;background:linear-gradient(#dedbd6,#d9d6d1 60%,#e6e3df);"></div>
<div style="left:1.00px;top:656.50px;width:38.50px;height:28.90px;background:#efebe7;"></div>
<span class="t" style="top:655.79px;font-family:'Liberation Mono',monospace;font-size:10.56px;color:#6e6e6e;line-height:14.0px;left:8.10px;">0020</span>
<span class="t" style="top:667.69px;font-family:'Liberation Mono',monospace;font-size:10.56px;color:#a2a2a2;line-height:14.0px;left:8.10px;">0030</span>
<div style="left:318.39px;top:657.30px;width:13.17px;height:12.20px;background:#308cc6;"></div>
<span class="t" style="top:655.79px;font-family:'Liberation Mono',monospace;font-size:10.56px;color:#1c1c1c;line-height:14.0px;left:46.20px;">e0 ee ab 4e 00 15 f0 3e  69 33 09 60 64 02 </span>
<span class="t" style="top:655.79px;font-family:'Liberation Mono',monospace;font-size:10.56px;color:#fff;line-height:14.0px;left:318.69px;">50</span>
<span class="t" style="top:655.79px;font-family:'Liberation Mono',monospace;font-size:10.56px;color:#1c1c1c;line-height:14.0px;left:337.70px;">10</span>
<span class="t" style="top:667.69px;font-family:'Liberation Mono',monospace;font-size:10.56px;color:#1c1c1c;line-height:14.0px;left:46.20px;">fa f0 a6 95 00 00</span>
<span class="t" style="top:655.79px;font-family:'Liberation Mono',monospace;font-size:10.56px;color:#9c9c9c;line-height:14.0px;left:369.80px;">···</span>
<span class="t" style="top:655.79px;font-family:'Liberation Mono',monospace;font-size:10.56px;color:#1c1c1c;line-height:14.0px;left:388.81px;">N</span>
<span class="t" style="top:655.79px;font-family:'Liberation Mono',monospace;font-size:10.56px;color:#9c9c9c;line-height:14.0px;left:395.15px;">···</span>
<span class="t" style="top:655.79px;font-family:'Liberation Mono',monospace;font-size:10.56px;color:#1c1c1c;line-height:14.0px;left:414.16px;">&gt;</span>
<span class="t" style="top:655.79px;font-family:'Liberation Mono',monospace;font-size:10.56px;color:#1c1c1c;line-height:14.0px;left:426.83px;">i3</span>
<span class="t" style="top:655.79px;font-family:'Liberation Mono',monospace;font-size:10.56px;color:#9c9c9c;line-height:14.0px;left:439.51px;">·</span>
<span class="t" style="top:655.79px;font-family:'Liberation Mono',monospace;font-size:10.56px;color:#1c1c1c;line-height:14.0px;left:445.84px;">`d</span>
<span class="t" style="top:655.79px;font-family:'Liberation Mono',monospace;font-size:10.56px;color:#9c9c9c;line-height:14.0px;left:458.52px;">·</span>
<div style="left:464.66px;top:657.30px;width:6.64px;height:12.20px;background:#308cc6;"></div>
<span class="t" style="top:655.79px;font-family:'Liberation Mono',monospace;font-size:10.56px;color:#fff;line-height:14.0px;left:464.86px;">P</span>
<span class="t" style="top:655.79px;font-family:'Liberation Mono',monospace;font-size:10.56px;color:#9c9c9c;line-height:14.0px;left:471.19px;">·</span>
<span class="t" style="top:667.69px;font-family:'Liberation Mono',monospace;font-size:10.56px;color:#9c9c9c;line-height:14.0px;left:369.80px;">······</span>
<div style="left:930.20px;top:656.50px;width:0.90px;height:28.90px;background:#b7b4b0;"></div>
<div style="left:931.10px;top:656.50px;width:7.90px;height:28.90px;background:#f5f4f2;"></div>
<div style="left:931.10px;top:666.00px;width:7.90px;height:10.00px;background:linear-gradient(90deg,#e4e2df,#fbfbfa 25%,#f7f6f5 70%,#eceae8);"></div>
<div style="left:931.10px;top:665.80px;width:7.90px;height:0.70px;background:#c9c6c2;"></div>
<div style="left:931.10px;top:675.80px;width:7.90px;height:0.70px;background:#c9c6c2;"></div>
<svg style="left:0;top:0;width:939px;height:700px;" viewBox="0 0 939 700"><polygon points="932.1999999999999,663.0 937.6,663.0 934.9,659.8" fill="#3c3b37"/></svg>
<svg style="left:0;top:0;width:939px;height:700px;" viewBox="0 0 939 700"><polygon points="932.1999999999999,679.0 937.6,679.0 934.9,682.2" fill="#3c3b37"/></svg>
<span class="t s" style="top:687.37px;font-family:'Liberation Sans',sans-serif;font-size:9.9px;color:#2e2d2a;line-height:14.0px;left:45.70px;transform:scaleX(1.0902);transform-origin:0 0;">Acknowledgment (tcp.flags.ack), 1 byte</span>
<span class="t s" style="top:687.37px;font-family:'Liberation Sans',sans-serif;font-size:9.9px;color:#2e2d2a;line-height:14.0px;left:585.00px;transform:scaleX(1.0397);transform-origin:0 0;">Packets: 39 · Displayed: 39 (100.0%) · Dropped: 0 (0.0%)</span>
<span class="t s" style="top:687.37px;font-family:'Liberation Sans',sans-serif;font-size:9.9px;color:#2e2d2a;line-height:14.0px;left:862.80px;transform:scaleX(1.1346);transform-origin:0 0;">Profile: Default</span>
<div style="left:574.50px;top:688.50px;width:0.80px;height:10.50px;background:#dcd9d5;"></div>
<div style="left:852.00px;top:688.50px;width:0.80px;height:10.50px;background:#dcd9d5;"></div>
<div style="left:0.00px;top:0.00px;width:939.00px;height:1.90px;background:linear-gradient(#3a3631,#45413b 55%,#8f8b85 85%,#dcd9d5);"></div>
<div style="left:0.00px;top:0.00px;width:1.20px;height:700.00px;background:linear-gradient(90deg,#4a4040 0,#4f4545 70%,#9a9290);"></div>
<svg style="left:0;top:0;width:939px;height:700px;" viewBox="0 0 939 700">
<defs>
<linearGradient id="gBlue" x1="0" y1="0" x2="0" y2="1"><stop offset="0" stop-color="#5069db"/><stop offset="1" stop-color="#2238aa"/></linearGradient>
<linearGradient id="gOr" gradientUnits="userSpaceOnUse" x1="0" y1="23" x2="0" y2="37.5"><stop offset="0" stop-color="#f8b46a"/><stop offset="0.5" stop-color="#f08a40"/><stop offset="1" stop-color="#e65a1a"/></linearGradient>
<linearGradient id="gOrD" gradientUnits="userSpaceOnUse" x1="0" y1="23" x2="0" y2="37.5"><stop offset="0" stop-color="#ea8a44"/><stop offset="1" stop-color="#dc5216"/></linearGradient>
<linearGradient id="gFold" x1="0" y1="0" x2="0.3" y2="1"><stop offset="0" stop-color="#f7bc7e"/><stop offset="0.5" stop-color="#ec7d3a"/><stop offset="1" stop-color="#e14a14"/></linearGradient>
<linearGradient id="gBtn" x1="0" y1="0" x2="0" y2="1"><stop offset="0" stop-color="#ffffff"/><stop offset="1" stop-color="#e6e5e3"/></linearGradient>
<linearGradient id="gPressed" x1="0" y1="0" x2="0" y2="1"><stop offset="0" stop-color="#d2d0cc"/><stop offset="1" stop-color="#e2e0dd"/></linearGradient>
<linearGradient id="gBm" x1="0" y1="0" x2="0" y2="1"><stop offset="0" stop-color="#5990d2"/><stop offset="1" stop-color="#7eaade"/></linearGradient>
<linearGradient id="gCirc" x1="0" y1="0" x2="0" y2="1"><stop offset="0" stop-color="#8db4e6"/><stop offset="1" stop-color="#6d9bd8"/></linearGradient>
<linearGradient id="gBand" x1="0" y1="0" x2="0" y2="1"><stop offset="0" stop-color="#2f9fe6"/><stop offset="0.6" stop-color="#55b4ec"/><stop offset="1" stop-color="#cfe9f8"/></linearGradient>
<radialGradient id="gLens" cx="0.45" cy="0.35" r="0.7"><stop offset="0" stop-color="#ffffff"/><stop offset="1" stop-color="#e6e5e3"/></radialGradient>
</defs>
<path d="M22.9,22.3 C14.5,22.8 8.0,29.5 7.3,38.5 L22.9,38.5 C20.4,34 19.9,28 22.9,22.3 Z" fill="#f4f3f1" stroke="#bdbbb8" stroke-width="0.9" stroke-linejoin="round"/>
<path d="M20.5,23.8 C14.8,24.6 9.9,30.0 8.9,37.0 L20.3,37.0 C18.5,33 18.4,28.5 20.5,23.8 Z" fill="url(#gBlue)"/>
<rect x="30.5" y="22.9" width="15.2" height="14.8" rx="1.2" fill="#eeece9" stroke="#cdcbc7" stroke-width="0.8"/>
<rect x="32.9" y="25.1" width="11.0" height="10.8" fill="#8c8b88"/>
<path d="M68.9,22.3 C60.5,22.8 54.0,29.5 53.3,38.5 L68.9,38.5 C66.4,34 65.9,28 68.9,22.3 Z" fill="#f4f3f1" stroke="#d8d6d3" stroke-width="0.8" stroke-linejoin="round"/>
<path d="M66.5,23.8 C60.8,24.6 55.9,30.0 54.9,37.0 L66.3,37.0 C64.5,33 64.4,28.5 66.5,23.8 Z" fill="#b5b3b0"/>
<path d="M62.0,30.1 A2.6,2.6 0 1 1 59.2,32.0" fill="none" stroke="#fafafa" stroke-width="1.4"/>
<path d="M62.7,28.1 L62.7,32.0 L60.1,30.05 Z" fill="#fafafa"/>
<circle cx="84.8" cy="30.3" r="7.9" fill="#fbfbfa" stroke="#636363" stroke-width="0.75"/>
<circle cx="84.8" cy="30.3" r="6.15" fill="#3a3a3a"/>
<polygon points="84.80,25.70 85.70,25.79 86.10,27.16 86.69,27.47 88.05,27.05 88.62,27.74 87.94,29.00 88.13,29.64 89.40,30.30 89.31,31.20 87.94,31.60 87.63,32.19 88.05,33.55 87.36,34.12 86.10,33.44 85.46,33.63 84.80,34.90 83.90,34.81 83.50,33.44 82.91,33.13 81.55,33.55 80.98,32.86 81.66,31.60 81.47,30.96 80.20,30.30 80.29,29.40 81.66,29.00 81.97,28.41 81.55,27.05 82.24,26.48 83.50,27.16 84.14,26.97" fill="#f4f4f4"/>
<circle cx="84.8" cy="30.3" r="2.2" fill="#333"/>
<rect x="98.7" y="24" width="1.0" height="13" fill="#e2dfdb"/>
<rect x="196.7" y="24" width="1.0" height="13" fill="#e2dfdb"/>
<rect x="364.0" y="24" width="1.0" height="13" fill="#e2dfdb"/>
<rect x="392.0" y="24" width="1.0" height="13" fill="#e2dfdb"/>
<path d="M104.4,24.0 Q104.4,23.2 105.2,23.2 L118.5,23.2 Q119.5,23.2 119.5,24.2 L119.5,37.4 L104.4,37.4 Z" fill="#d9d9d8" stroke="#bcbcbb" stroke-width="0.6"/>
<rect x="105.0" y="24.6" width="1.6" height="1.0" fill="#f0b060"/>
<path d="M108.6,22.7 L114.6,22.7 L117.6,25.5 L117.6,31 L108.6,31 Z" fill="#f8f8f8" stroke="#c4c4c4" stroke-width="0.6"/>
<path d="M114.6,22.7 L114.6,25.5 L117.6,25.5 Z" fill="#d0d0d0"/>
<rect x="106.0" y="29.5" width="15.3" height="8.1" rx="0.8" fill="url(#gFold)" stroke="#dc4612" stroke-width="0.7"/>
<path d="M129.3,22.5 L139.70000000000002,22.5 L142.9,25.7 L142.9,38.5 L129.3,38.5 Z" fill="#fbfbef" stroke="#8b8b89" stroke-width="0.9" stroke-linejoin="round"/>
<path d="M129.8,23.0 L139.50000000000003,23.0 L142.4,26.0 L142.4,26.8 L129.8,26.8 Z" fill="url(#gBand)"/>
<path d="M132.5,26.9 C133.3,25.1 134.3,23.9 135.9,23.0 C135.4,24.3 135.5,25.5 136.5,26.9 Z" fill="#fbfbef"/>
<path d="M139.70000000000002,22.5 L139.70000000000002,25.7 L142.9,25.7 Z" fill="#e9e9e2" stroke="#8b8b89" stroke-width="0.5"/>
<rect x="132.20000000000002" y="28.5" width="8.0" height="1.9" fill="#adada9" opacity="0.6"/>
<rect x="133.95000000000002" y="28.5" width="0.5" height="1.9" fill="#fbfbef" opacity="0.7"/>
<rect x="135.95000000000002" y="28.5" width="0.5" height="1.9" fill="#fbfbef" opacity="0.7"/>
<rect x="137.95000000000002" y="28.5" width="0.5" height="1.9" fill="#fbfbef" opacity="0.7"/>
<rect x="132.20000000000002" y="31.9" width="8.0" height="1.9" fill="#adada9" opacity="0.6"/>
<rect x="133.95000000000002" y="31.9" width="0.5" height="1.9" fill="#fbfbef" opacity="0.7"/>
<rect x="135.95000000000002" y="31.9" width="0.5" height="1.9" fill="#fbfbef" opacity="0.7"/>
<rect x="137.95000000000002" y="31.9" width="0.5" height="1.9" fill="#fbfbef" opacity="0.7"/>
<rect x="132.20000000000002" y="35.2" width="8.0" height="1.9" fill="#adada9" opacity="0.6"/>
<rect x="133.95000000000002" y="35.2" width="0.5" height="1.9" fill="#fbfbef" opacity="0.7"/>
<rect x="135.95000000000002" y="35.2" width="0.5" height="1.9" fill="#fbfbef" opacity="0.7"/>
<rect x="137.95000000000002" y="35.2" width="0.5" height="1.9" fill="#fbfbef" opacity="0.7"/>
<path d="M152.5,22.5 L162.9,22.5 L166.1,25.7 L166.1,38.5 L152.5,38.5 Z" fill="#fbfbef" stroke="#8b8b89" stroke-width="0.9" stroke-linejoin="round"/>
<path d="M153.0,23.0 L162.70000000000002,23.0 L165.6,26.0 L165.6,26.8 L153.0,26.8 Z" fill="url(#gBand)"/>
<path d="M155.7,26.9 C156.5,25.1 157.5,23.9 159.1,23.0 C158.6,24.3 158.7,25.5 159.7,26.9 Z" fill="#fbfbef"/>
<path d="M162.9,22.5 L162.9,25.7 L166.1,25.7 Z" fill="#e9e9e2" stroke="#8b8b89" stroke-width="0.5"/>
<rect x="155.4" y="28.5" width="8.0" height="1.9" fill="#adada9" opacity="0.6"/>
<rect x="157.15" y="28.5" width="0.5" height="1.9" fill="#fbfbef" opacity="0.7"/>
<rect x="159.15" y="28.5" width="0.5" height="1.9" fill="#fbfbef" opacity="0.7"/>
<rect x="161.15" y="28.5" width="0.5" height="1.9" fill="#fbfbef" opacity="0.7"/>
<rect x="155.4" y="31.9" width="8.0" height="1.9" fill="#adada9" opacity="0.6"/>
<rect x="157.15" y="31.9" width="0.5" height="1.9" fill="#fbfbef" opacity="0.7"/>
<rect x="159.15" y="31.9" width="0.5" height="1.9" fill="#fbfbef" opacity="0.7"/>
<rect x="161.15" y="31.9" width="0.5" height="1.9" fill="#fbfbef" opacity="0.7"/>
<rect x="155.4" y="35.2" width="8.0" height="1.9" fill="#adada9" opacity="0.6"/>
<rect x="157.15" y="35.2" width="0.5" height="1.9" fill="#fbfbef" opacity="0.7"/>
<rect x="159.15" y="35.2" width="0.5" height="1.9" fill="#fbfbef" opacity="0.7"/>
<rect x="161.15" y="35.2" width="0.5" height="1.9" fill="#fbfbef" opacity="0.7"/>
<path d="M155.3,25.6 L164.0,35.0 M164.0,25.6 L155.3,35.0" stroke="#2b2f33" stroke-width="1.7" stroke-linecap="round"/>
<path d="M176.1,22.5 L186.5,22.5 L189.7,25.7 L189.7,38.5 L176.1,38.5 Z" fill="#fbfbef" stroke="#8b8b89" stroke-width="0.9" stroke-linejoin="round"/>
<path d="M176.6,23.0 L186.3,23.0 L189.2,26.0 L189.2,26.8 L176.6,26.8 Z" fill="url(#gBand)"/>
<path d="M179.29999999999998,26.9 C180.1,25.1 181.1,23.9 182.7,23.0 C182.2,24.3 182.29999999999998,25.5 183.29999999999998,26.9 Z" fill="#fbfbef"/>
<path d="M186.5,22.5 L186.5,25.7 L189.7,25.7 Z" fill="#e9e9e2" stroke="#8b8b89" stroke-width="0.5"/>
<rect x="179.0" y="28.5" width="8.0" height="1.9" fill="#adada9" opacity="0.6"/>
<rect x="180.75" y="28.5" width="0.5" height="1.9" fill="#fbfbef" opacity="0.7"/>
<rect x="182.75" y="28.5" width="0.5" height="1.9" fill="#fbfbef" opacity="0.7"/>
<rect x="184.75" y="28.5" width="0.5" height="1.9" fill="#fbfbef" opacity="0.7"/>
<rect x="179.0" y="31.9" width="8.0" height="1.9" fill="#adada9" opacity="0.6"/>
<rect x="180.75" y="31.9" width="0.5" height="1.9" fill="#fbfbef" opacity="0.7"/>
<rect x="182.75" y="31.9" width="0.5" height="1.9" fill="#fbfbef" opacity="0.7"/>
<rect x="184.75" y="31.9" width="0.5" height="1.9" fill="#fbfbef" opacity="0.7"/>
<rect x="179.0" y="35.2" width="8.0" height="1.9" fill="#adada9" opacity="0.6"/>
<rect x="180.75" y="35.2" width="0.5" height="1.9" fill="#fbfbef" opacity="0.7"/>
<rect x="182.75" y="35.2" width="0.5" height="1.9" fill="#fbfbef" opacity="0.7"/>
<rect x="184.75" y="35.2" width="0.5" height="1.9" fill="#fbfbef" opacity="0.7"/>
<path d="M187.0,29.3 A4.4,4.4 0 1 1 182.6,26.1" fill="none" stroke="#1f4f9d" stroke-width="1.6"/>
<path d="M182.3,23.5 L186.3,25.6 L182.8,28.5 Z" fill="#1f4f9d"/>
<path d="M213.6,33.0 L217.6,36.7" stroke="#2a2a2a" stroke-width="3.0" stroke-linecap="round"/>
<circle cx="209.7" cy="28.5" r="5.55" fill="url(#gLens)" stroke="#3c54ae" stroke-width="2.1"/>
<circle cx="209.7" cy="28.5" r="6.6" fill="none" stroke="#2c3f96" stroke-width="0.4" opacity="0.6"/>
<path d="M235.6,24.6 L230.6,30.25 L235.6,35.9" fill="none" stroke="#ffffff" stroke-opacity="0.55" stroke-width="4.2" stroke-linecap="round" stroke-linejoin="round"/>
<path d="M235.6,24.6 L230.6,30.25 L235.6,35.9" fill="none" stroke="url(#gOrD)" stroke-width="3.1" stroke-linecap="round" stroke-linejoin="round"/>
<path d="M235.6,24.6 L230.6,30.25 L235.6,35.9" fill="none" stroke="url(#gOr)" stroke-width="2.1" stroke-linecap="round" stroke-linejoin="round"/>
<path d="M256.3,24.6 L261.3,30.25 L256.3,35.9" fill="none" stroke="#ffffff" stroke-opacity="0.55" stroke-width="4.2" stroke-linecap="round" stroke-linejoin="round"/>
<path d="M256.3,24.6 L261.3,30.25 L256.3,35.9" fill="none" stroke="url(#gOrD)" stroke-width="3.1" stroke-linecap="round" stroke-linejoin="round"/>
<path d="M256.3,24.6 L261.3,30.25 L256.3,35.9" fill="none" stroke="url(#gOr)" stroke-width="2.1" stroke-linecap="round" stroke-linejoin="round"/>
<path d="M275.4,26.4 C275.8,22.6 282.6,22.6 282.4,28.2 L281.8,32.5" fill="none" stroke="#ffffff" stroke-opacity="0.55" stroke-width="5.0" stroke-linecap="round" stroke-linejoin="round"/>
<path d="M277.3,32.0 L281.4,35.9 L285.5,32.0" fill="none" stroke="#ffffff" stroke-opacity="0.55" stroke-width="4.5" stroke-linecap="round" stroke-linejoin="round"/>
<path d="M275.4,26.4 C275.8,22.6 282.6,22.6 282.4,28.2 L281.8,32.5" fill="none" stroke="url(#gOrD)" stroke-width="3.9" stroke-linecap="round" stroke-linejoin="round"/>
<path d="M277.3,32.0 L281.4,35.9 L285.5,32.0" fill="none" stroke="url(#gOrD)" stroke-width="3.4" stroke-linecap="round" stroke-linejoin="round"/>
<path d="M275.4,26.4 C275.8,22.6 282.6,22.6 282.4,28.2 L281.8,32.5" fill="none" stroke="url(#gOr)" stroke-width="2.9" stroke-linecap="round" stroke-linejoin="round"/>
<path d="M277.3,32.0 L281.4,35.9 L285.5,32.0" fill="none" stroke="url(#gOr)" stroke-width="2.4" stroke-linecap="round" stroke-linejoin="round"/>
<path d="M277.6,31.6 L285.2,31.6 L281.4,35.6 Z" fill="url(#gOr)"/>
<path d="M297.3,25.3 L297.3,35.3" fill="none" stroke="#ffffff" stroke-opacity="0.55" stroke-width="3.6" stroke-linecap="round" stroke-linejoin="round"/>
<path d="M300.2,30.25 L310.3,30.25" fill="none" stroke="#ffffff" stroke-opacity="0.55" stroke-width="5.0" stroke-linecap="round" stroke-linejoin="round"/>
<path d="M302.7,25.9 L299.9,30.25 L302.7,34.6" fill="none" stroke="#ffffff" stroke-opacity="0.55" stroke-width="3.9" stroke-linecap="round" stroke-linejoin="round"/>
<path d="M297.3,25.3 L297.3,35.3" fill="none" stroke="url(#gOrD)" stroke-width="2.5" stroke-linecap="round" stroke-linejoin="round"/>
<path d="M300.2,30.25 L310.3,30.25" fill="none" stroke="url(#gOrD)" stroke-width="3.9" stroke-linecap="round" stroke-linejoin="round"/>
<path d="M302.7,25.9 L299.9,30.25 L302.7,34.6" fill="none" stroke="url(#gOrD)" stroke-width="2.8" stroke-linecap="round" stroke-linejoin="round"/>
<path d="M297.3,25.3 L297.3,35.3" fill="none" stroke="url(#gOr)" stroke-width="1.5" stroke-linecap="round" stroke-linejoin="round"/>
<path d="M300.2,30.25 L310.3,30.25" fill="none" stroke="url(#gOr)" stroke-width="2.9" stroke-linecap="round" stroke-linejoin="round"/>
<path d="M302.7,25.9 L299.9,30.25 L302.7,34.6" fill="none" stroke="url(#gOr)" stroke-width="1.7999999999999998" stroke-linecap="round" stroke-linejoin="round"/>
<path d="M333.7,25.3 L333.7,35.3" fill="none" stroke="#ffffff" stroke-opacity="0.55" stroke-width="3.6" stroke-linecap="round" stroke-linejoin="round"/>
<path d="M320.7,30.25 L330.8,30.25" fill="none" stroke="#ffffff" stroke-opacity="0.55" stroke-width="5.0" stroke-linecap="round" stroke-linejoin="round"/>
<path d="M328.3,25.9 L331.1,30.25 L328.3,34.6" fill="none" stroke="#ffffff" stroke-opacity="0.55" stroke-width="3.9" stroke-linecap="round" stroke-linejoin="round"/>
<path d="M333.7,25.3 L333.7,35.3" fill="none" stroke="url(#gOrD)" stroke-width="2.5" stroke-linecap="round" stroke-linejoin="round"/>
<path d="M320.7,30.25 L330.8,30.25" fill="none" stroke="url(#gOrD)" stroke-width="3.9" stroke-linecap="round" stroke-linejoin="round"/>
<path d="M328.3,25.9 L331.1,30.25 L328.3,34.6" fill="none" stroke="url(#gOrD)" stroke-width="2.8" stroke-linecap="round" stroke-linejoin="round"/>
<path d="M333.7,25.3 L333.7,35.3" fill="none" stroke="url(#gOr)" stroke-width="1.5" stroke-linecap="round" stroke-linejoin="round"/>
<path d="M320.7,30.25 L330.8,30.25" fill="none" stroke="url(#gOr)" stroke-width="2.9" stroke-linecap="round" stroke-linejoin="round"/>
<path d="M328.3,25.9 L331.1,30.25 L328.3,34.6" fill="none" stroke="url(#gOr)" stroke-width="1.7999999999999998" stroke-linecap="round" stroke-linejoin="round"/>
<rect x="339.3" y="20.2" width="22.4" height="21.3" rx="2.4" fill="url(#gPressed)" stroke="#b4b1ac" stroke-width="0.9"/>
<rect x="367.4" y="20.2" width="22.4" height="21.3" rx="2.4" fill="url(#gPressed)" stroke="#b4b1ac" stroke-width="0.9"/>
<rect x="342.9" y="22.1" width="15.4" height="16.2" fill="#ffffff"/>
<rect x="342.9" y="22.1" width="15.4" height="1.6" fill="#8a8c87"/>
<rect x="342.9" y="25.25" width="15.4" height="0.7" fill="#d3d7cf"/>
<rect x="342.9" y="27.25" width="15.4" height="0.7" fill="#d3d7cf"/>
<rect x="342.9" y="29.25" width="15.4" height="0.7" fill="#d3d7cf"/>
<rect x="342.9" y="31.25" width="15.4" height="0.7" fill="#d3d7cf"/>
<rect x="342.9" y="33.25" width="15.4" height="0.7" fill="#d3d7cf"/>
<rect x="342.9" y="35.25" width="15.4" height="0.7" fill="#d3d7cf"/>
<rect x="342.9" y="37.2" width="15.4" height="1.2" fill="#555753"/>
<path d="M350.3,34.3 L357.1,34.3 L357.1,35.3 L353.7,37.9 L350.3,35.3 Z" fill="#2c63b4" stroke="#2c63b4" stroke-width="0.3" stroke-linejoin="round"/>
<rect x="371.1" y="22.2" width="15.3" height="16.1" fill="#ffffff"/>
<rect x="371.1" y="22.25" width="15.3" height="1.3" fill="#8a8c87"/>
<rect x="371.1" y="24.450000000000003" width="15.3" height="1.3" fill="#f28b8b"/>
<rect x="371.1" y="26.85" width="15.3" height="1.3" fill="#5b8ccb"/>
<rect x="371.1" y="28.75" width="15.3" height="1.3" fill="#86dc3a"/>
<rect x="371.1" y="30.85" width="15.3" height="1.3" fill="#4f7fc6"/>
<rect x="371.1" y="32.800000000000004" width="15.3" height="1.3" fill="#8b5c9c"/>
<rect x="371.1" y="34.95" width="15.3" height="1.3" fill="#dbbb3c"/>
<rect x="371.1" y="36.95" width="15.3" height="1.3" fill="#555753"/>
<rect x="400.7" y="24.5" width="12.4" height="12.1" rx="2.2" fill="url(#gBtn)" stroke="#a9a7a3" stroke-width="0.8"/>
<path d="M402.3,36.75 L411.5,36.75" stroke="#6f6d69" stroke-width="0.9" opacity="0.85"/>
<rect x="424.2" y="24.5" width="12.4" height="12.1" rx="2.2" fill="url(#gBtn)" stroke="#a9a7a3" stroke-width="0.8"/>
<path d="M425.8,36.75 L435.0,36.75" stroke="#6f6d69" stroke-width="0.9" opacity="0.85"/>
<rect x="447.3" y="24.5" width="12.4" height="12.1" rx="2.2" fill="url(#gBtn)" stroke="#a9a7a3" stroke-width="0.8"/>
<path d="M448.90000000000003,36.75 L458.1,36.75" stroke="#6f6d69" stroke-width="0.9" opacity="0.85"/>
<path d="M406.0,26.900000000000002 L407.79999999999995,26.900000000000002 L407.79999999999995,29.400000000000002 L410.29999999999995,29.400000000000002 L410.29999999999995,31.2 L407.79999999999995,31.2 L407.79999999999995,33.7 L406.0,33.7 L406.0,31.2 L403.5,31.2 L403.5,29.400000000000002 L406.0,29.400000000000002 Z" fill="#ffffff" stroke="#6d6b67" stroke-width="0.75" stroke-linejoin="round"/>
<path d="M427.0,29.400000000000002 L433.79999999999995,29.400000000000002 L433.79999999999995,31.2 L427.0,31.2 Z" fill="#ffffff" stroke="#6d6b67" stroke-width="0.75" stroke-linejoin="round"/>
<path d="M451.5,28.7 L454.0,27.0 L455.40000000000003,27.0 L455.40000000000003,33.6 L453.7,33.6 L453.7,28.900000000000002 L452.2,30.0 Z" fill="#ffffff" stroke="#aeaca8" stroke-width="0.75" stroke-linejoin="round"/>
<rect x="469.0" y="22.2" width="15.3" height="16.0" fill="#ffffff"/>
<rect x="469.0" y="25.0" width="15.3" height="0.8" fill="#c3c6be"/>
<rect x="469.0" y="27.0" width="15.3" height="0.8" fill="#c3c6be"/>
<rect x="469.0" y="29.0" width="15.3" height="0.8" fill="#c3c6be"/>
<rect x="469.0" y="31.0" width="15.3" height="0.8" fill="#c3c6be"/>
<rect x="469.0" y="33.0" width="15.3" height="0.8" fill="#c3c6be"/>
<rect x="469.0" y="35.0" width="15.3" height="0.8" fill="#c3c6be"/>
<rect x="469.0" y="22.3" width="15.3" height="1.5" fill="#90928d"/>
<rect x="469.0" y="37.1" width="15.3" height="1.1" fill="#555753"/>
<rect x="472.2" y="22.3" width="0.75" height="15.9" fill="#83857f"/>
<rect x="478.05" y="22.3" width="0.75" height="15.9" fill="#83857f"/>
<path d="M470.0,24.9 L473.4,27.4 L470.0,29.9 Z" fill="#2c63b4"/>
<path d="M481.3,24.9 L477.9,27.4 L481.3,29.9 Z" fill="#2c63b4"/>
<path d="M7.2,50.2 L13.1,50.2 L13.1,59.9 L10.15,57.6 L7.2,59.9 Z" fill="url(#gBm)"/>
<rect x="812.1" y="50.0" width="17.0" height="9.9" rx="1.6" fill="#7aa3d6"/>
<path d="M815.0,54.1 L822.3,54.1 L822.3,52.2 L826.4,54.95 L822.3,57.7 L822.3,55.8 L815.0,55.8 Z" fill="#ffffff"/>
<path d="M834.8,53.8 L838.8,53.8 L836.8,56.2 Z" fill="#3c3b37"/>
<circle cx="12.8" cy="693.9" r="4.6" fill="url(#gCirc)" stroke="#4a74b4" stroke-width="0.8"/>
<rect x="24.8" y="689.3" width="8.4" height="8.4" fill="#fafaf6" stroke="#c8c8c4" stroke-width="0.6"/>
<rect x="25.1" y="689.6" width="7.8" height="1.7" fill="#3fa9ea"/>
<path d="M27.2,691.4 C27.6,690.6 28.1,690.1 28.8,689.7 C28.6,690.4 28.7,690.9 29.0,691.4 Z" fill="#fafaf6"/>
<path d="M33.3,689.6 L27.9,695.4" stroke="#4b4b4b" stroke-width="1.4" stroke-linecap="round"/>
<path d="M27.9,695.4 L27.1,696.4" stroke="#333" stroke-width="0.8" stroke-linecap="round"/>
</svg>
</body></html>
